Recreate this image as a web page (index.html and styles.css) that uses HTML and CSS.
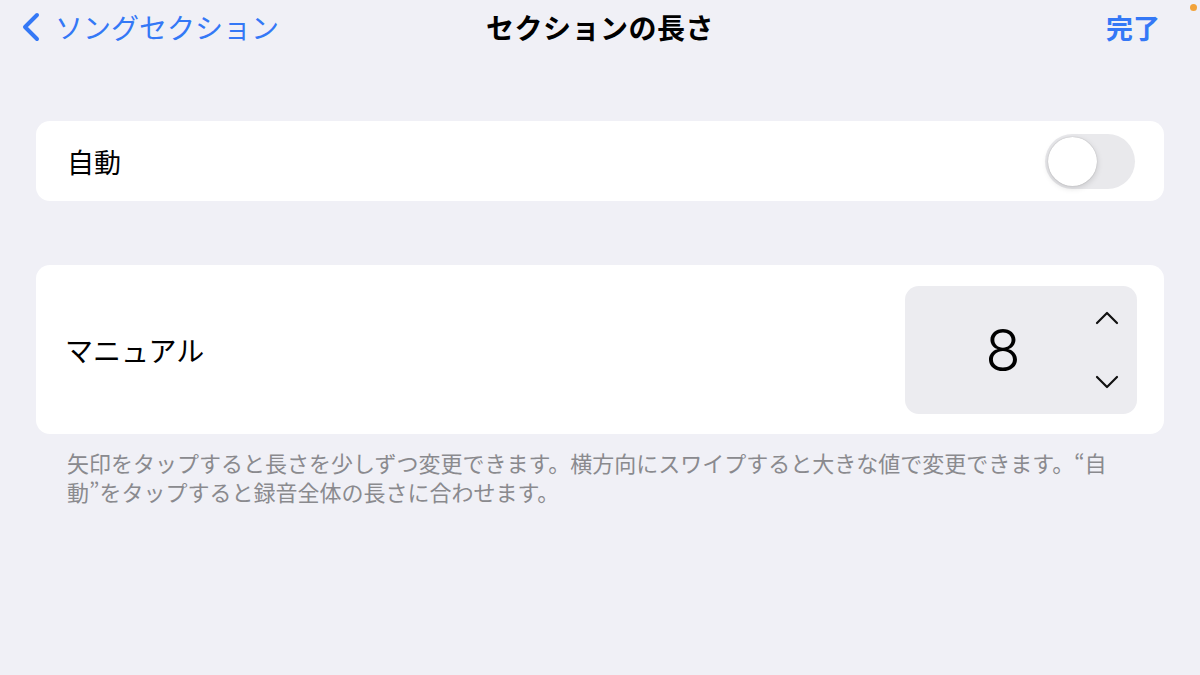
FILE: index.html
```html
<!DOCTYPE html>
<html lang="ja">
<head>
    <meta charset="UTF-8">
    <meta name="viewport" content="width=device-width, initial-scale=1.0">
    <title>セクションの長さ</title>
    <link rel="stylesheet" href="styles.css">
</head>
<body>
    <div class="status-dot"></div>

    <div class="nav">
        <a class="nav-back">
            <svg width="20" height="30" viewBox="0 0 20 30">
                <polyline points="16,3 4,15 16,27" fill="none" stroke="#3478f6" stroke-width="4" stroke-linecap="round" stroke-linejoin="round"/>
            </svg>
            <span>ソングセクション</span>
        </a>
        <div class="nav-title">セクションの長さ</div>
        <a class="nav-done">完了</a>
    </div>

    <div class="content">
        <div class="card auto-row">
            <span class="row-label">自動</span>
            <div class="toggle">
                <div class="toggle-knob"></div>
            </div>
        </div>

        <div class="card manual-row">
            <span class="row-label">マニュアル</span>
            <div class="stepper">
                <div class="stepper-value">8</div>
                <div class="stepper-arrows">
                    <svg width="24" height="14" viewBox="0 0 24 14">
                        <polyline points="2,12 12,2 22,12" fill="none" stroke="#111" stroke-width="2.2" stroke-linecap="round" stroke-linejoin="round"/>
                    </svg>
                    <svg width="24" height="14" viewBox="0 0 24 14">
                        <polyline points="2,2 12,12 22,2" fill="none" stroke="#111" stroke-width="2.2" stroke-linecap="round" stroke-linejoin="round"/>
                    </svg>
                </div>
            </div>
        </div>

        <p class="footnote">矢印をタップすると長さを少しずつ変更できます。横方向にスワイプすると大きな値で変更できます。“自<br>動”をタップすると録音全体の長さに合わせます。</p>
    </div>
</body>
</html>
```

FILE: styles.css
```css
body {
    margin: 0;
    background-color: #f0f0f6;
    color: #000;
    font-family: "Noto Sans CJK JP", "Noto Sans", sans-serif;
    height: 675px;
    overflow: hidden;
}

.status-dot {
    position: absolute;
    top: 4px;
    left: 1190px;
    width: 7px;
    height: 7px;
    border-radius: 50%;
    background: #f2a33a;
}

.nav {
    height: 54px;
    display: grid;
    grid-template-columns: 1fr auto 1fr;
    align-items: center;
    padding: 0 21px;
}

.nav-back {
    display: flex;
    align-items: center;
    gap: 14px;
    color: #3478f6;
    font-size: 28px;
}

.nav-back svg {
    display: block;
}

.nav-title {
    font-size: 28px;
    font-weight: 700;
    letter-spacing: 0.5px;
}

.nav-done {
    justify-self: end;
    margin-right: 19px;
    color: #3478f6;
    font-size: 27px;
    font-weight: 700;
}

.content {
    padding: 67px 36px 0;
}

.card {
    background: white;
    border-radius: 14px;
    display: flex;
    align-items: center;
    justify-content: space-between;
}

.row-label {
    font-size: 27px;
}

.auto-row {
    height: 80px;
    padding: 0 29px 0 31px;
}

.toggle {
    width: 90px;
    height: 55px;
    border-radius: 28px;
    background: #e9e9ec;
    display: flex;
    align-items: center;
    padding: 0 3px;
    box-sizing: border-box;
}

.toggle-knob {
    width: 49px;
    height: 49px;
    border-radius: 50%;
    background: white;
    box-shadow: 0 2px 6px #00000026, 0 0 1px #0000004d;
}

.manual-row {
    margin-top: 64px;
    height: 169px;
    padding: 0 27px 0 29px;
}

.manual-row .row-label {
    font-size: 28px;
}

.stepper {
    width: 232px;
    height: 128px;
    border-radius: 14px;
    background: #ececf0;
    display: flex;
    align-items: center;
    padding: 0 18px 0 6px;
    box-sizing: border-box;
}

.stepper-value {
    flex-grow: 1;
    text-align: center;
    font-family: "Inter", sans-serif;
    font-size: 58px;
    font-weight: 300;
    line-height: 1;
}

.stepper-arrows {
    display: flex;
    flex-direction: column;
    gap: 50px;
}

.stepper-arrows svg {
    display: block;
}

.footnote {
    margin: 14px 0 0 31px;
    color: #8a8a8e;
    font-size: 22px;
    line-height: 29px;
}
```
